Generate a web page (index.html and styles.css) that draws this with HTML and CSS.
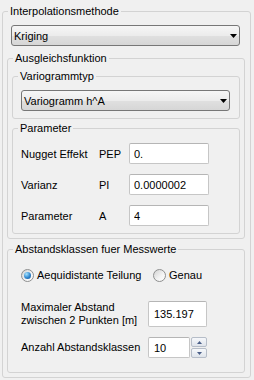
FILE: index.html
```html
<!DOCTYPE html>
<html lang="de">

<head>
    <meta charset="UTF-8">
    <meta name="viewport" content="width=device-width, initial-scale=1.0">
    <title>Interpolationsmethode</title>
    <link rel="stylesheet" href="styles.css">
</head>

<body>

    <fieldset class="group" id="interpolation">
        <legend>Interpolationsmethode</legend>

        <div class="combo" id="methode">
            <span>Kriging</span>
            <svg class="arrow" width="7" height="4" viewBox="0 0 7 4"><polygon points="0,0 7,0 3.5,4" /></svg>
        </div>

        <fieldset class="group" id="ausgleich">
            <legend>Ausgleichsfunktion</legend>

            <fieldset class="group inner" id="variogramm">
                <legend>Variogrammtyp</legend>
                <div class="combo" id="vario_typ">
                    <span>Variogramm h^A</span>
                    <svg class="arrow" width="7" height="4" viewBox="0 0 7 4"><polygon points="0,0 7,0 3.5,4" /></svg>
                </div>
            </fieldset>

            <fieldset class="group inner" id="parameter">
                <legend>Parameter</legend>
                <div class="param_row">
                    <span class="lbl">Nugget Effekt</span>
                    <span class="sym">PEP</span>
                    <input class="field" type="text" value="0.">
                </div>
                <div class="param_row">
                    <span class="lbl">Varianz</span>
                    <span class="sym">PI</span>
                    <input class="field" type="text" value="0.0000002">
                </div>
                <div class="param_row">
                    <span class="lbl">Parameter</span>
                    <span class="sym">A</span>
                    <input class="field" type="text" value="4">
                </div>
            </fieldset>
        </fieldset>

        <fieldset class="group" id="abstand">
            <legend>Abstandsklassen fuer Messwerte</legend>
            <div class="abstand_wrap">
                <div class="radio_row">
                    <label class="radio first"><input type="radio" name="teilung" checked>Aequidistante Teilung</label>
                    <label class="radio"><input type="radio" name="teilung">Genau</label>
                </div>

                <div class="dist_row" id="max_row">
                    <span class="lbl">Maximaler Abstand<br>zwischen 2 Punkten [m]</span>
                    <input class="field wide" type="text" value="135.197">
                </div>

                <div class="dist_row" id="anzahl_row">
                    <span class="lbl">Anzahl Abstandsklassen</span>
                    <input class="field short" type="text" value="10">
                    <div class="spin">
                        <button type="button"><svg width="5" height="3" viewBox="0 0 5 3"><polygon points="0,3 5,3 2.5,0" /></svg></button>
                        <button type="button"><svg width="5" height="3" viewBox="0 0 5 3"><polygon points="0,0 5,0 2.5,3" /></svg></button>
                    </div>
                </div>
            </div>
        </fieldset>
    </fieldset>

</body>

</html>
```

FILE: styles.css
```css
body {
    margin: 0;
    width: 254px;
    height: 380px;
    background: #f0f0f0;
    font-family: 'Liberation Sans', Arial, sans-serif;
    font-size: 11px;
    color: #000;
}

/* group boxes */
.group {
    margin: 0;
    padding: 0;
    min-width: 0;
    border: 1px solid #d3d3d3;
    border-radius: 3px;
}

.group > legend {
    margin-left: 5px;
    padding: 0 2px;
    line-height: 13px;
}

#interpolation {
    margin: 5px 3px 0 2px;
    padding-bottom: 4px;
}

#ausgleich {
    margin: 6px 5px 0 4px;
    padding-bottom: 4px;
}

#variogramm {
    margin: 5px 4px 0 4px;
    padding-bottom: 7px;
}

#parameter {
    margin: 3px 4px 0 4px;
    padding: 8px 0 7px;
}

#abstand {
    margin: 4px 5px 0 4px;
    padding-bottom: 14px;
}

/* combo boxes */
.combo {
    display: flex;
    align-items: center;
    height: 21px;
    box-sizing: border-box;
    padding: 0 2px 0 2px;
    border: 1px solid #777;
    border-radius: 3px;
    background: linear-gradient(#f6f6f6, #ececec 50%, #e0e0e0 51%, #d6d6d6);
}

.combo .arrow {
    margin-left: auto;
    fill: #000;
}

#methode {
    margin: 7px 10px 0 8px;
}

#vario_typ {
    margin: 7px 9px 0 8px;
}

/* text fields */
.field {
    height: 21px;
    box-sizing: border-box;
    margin: 0;
    padding: 0 4px;
    border: 1px solid #c6c6c6;
    border-top-color: #b5b5b5;
    border-radius: 2px;
    background: #fff;
    font: inherit;
    color: #000;
    outline: none;
}

.param_row {
    display: flex;
    align-items: center;
    margin-left: 8px;
}

.param_row + .param_row {
    margin-top: 10px;
}

.param_row .lbl {
    width: 78px;
}

.param_row .sym {
    width: 30px;
}

.param_row .field {
    width: 80px;
}

/* abstandsklassen */
.abstand_wrap {
    padding: 13px 0 0 13px;
}

.radio_row {
    display: flex;
    height: 13px;
}

.radio {
    display: flex;
    align-items: center;
    gap: 3px;
    line-height: 13px;
}

.radio.first {
    width: 132px;
}

.radio input {
    appearance: none;
    display: grid;
    place-items: center;
    width: 13px;
    height: 13px;
    margin: 0;
    box-sizing: border-box;
    border: 1px solid #8e8f8f;
    border-radius: 50%;
    background: linear-gradient(135deg, #d2d2d2, #f4f4f4 60%, #fdfdfd);
}

.radio input:checked::before {
    content: "";
    width: 7px;
    height: 7px;
    border-radius: 50%;
    background: radial-gradient(circle at 35% 30%, #a6e4ff, #2f86cf 55%, #17508b);
}

.dist_row {
    display: flex;
    align-items: center;
}

.dist_row .lbl {
    width: 127px;
    line-height: 13px;
}

#max_row {
    margin-top: 19px;
}

#anzahl_row {
    margin-top: 10px;
}

.field.wide {
    width: 59px;
    height: 26px;
    padding-left: 5px;
}

.field.short {
    width: 42px;
    padding-left: 5px;
}

.spin {
    display: flex;
    flex-direction: column;
    gap: 1px;
    margin-left: 1px;
}

.spin button {
    display: grid;
    place-items: center;
    width: 16px;
    height: 10px;
    padding: 0;
    border: 1px solid #b6bdc8;
    border-radius: 2px;
    background: linear-gradient(#f6f8fb, #dfe4eb);
}

.spin svg {
    fill: #4b5f88;
}
```
